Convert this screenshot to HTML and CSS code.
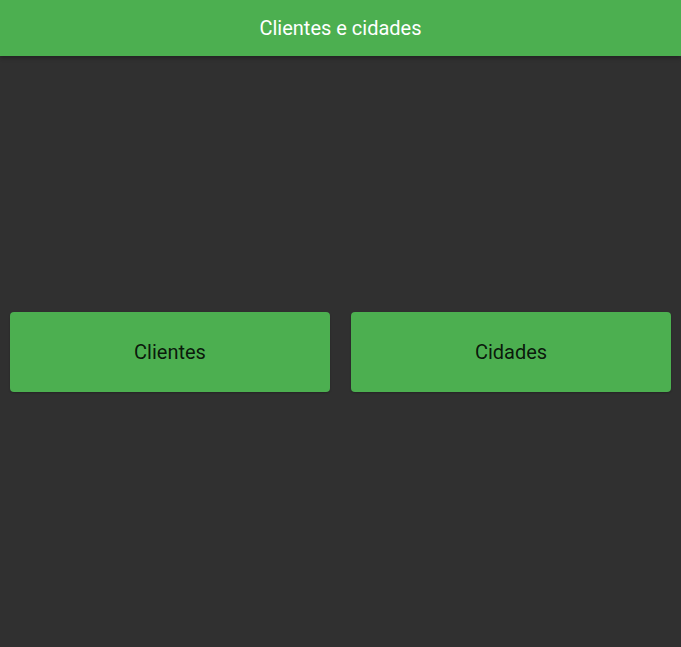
FILE: index.html
```html
<!DOCTYPE html>
<html lang="pt">
<head>
<meta charset="utf-8">
<title>Clientes e cidades</title>
<link rel="stylesheet" href="styles.css">
</head>
<body>
<div class="app">
  <header class="appbar">
    <h1 class="appbar-title">Clientes e cidades</h1>
  </header>
  <main class="content">
    <button class="nav-btn" type="button">Clientes</button>
    <button class="nav-btn" type="button">Cidades</button>
  </main>
</div>
</body>
</html>
```
FILE: styles.css
```css
html, body {
  margin: 0;
  padding: 0;
  height: 100%;
  background: #303030;
  font-family: Roboto, "Noto Sans", sans-serif;
}
.app {
  display: flex;
  flex-direction: column;
  height: 100vh;
}
.appbar {
  height: 56px;
  flex: 0 0 56px;
  background: #4caf50;
  display: flex;
  align-items: center;
  justify-content: center;
  box-shadow: 0 2px 4px rgba(0, 0, 0, 0.3);
  position: relative;
  z-index: 1;
}
.appbar-title {
  margin: 0;
  font-size: 20px;
  font-weight: 400;
  color: #ffffff;
}
.content {
  flex: 1;
  display: flex;
  align-items: center;
  gap: 21px;
  padding: 0 10px;
}
.nav-btn {
  flex: 1;
  height: 80px;
  border: none;
  border-radius: 4px;
  background: #4caf50;
  color: rgba(0, 0, 0, 0.87);
  font-family: Roboto, "Noto Sans", sans-serif;
  font-size: 20px;
  font-weight: 400;
  box-shadow: 0 1px 2px rgba(0, 0, 0, 0.25);
  padding: 0;
  cursor: pointer;
}
```
